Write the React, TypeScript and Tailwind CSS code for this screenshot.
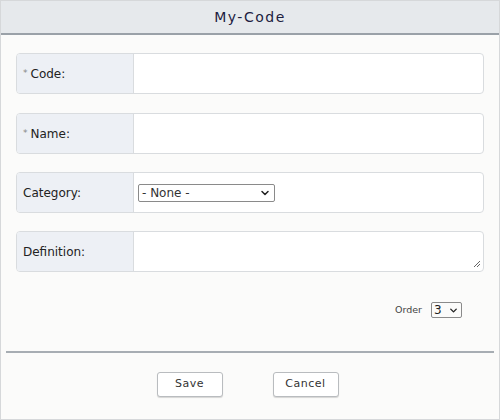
import { ChevronDown } from 'lucide-react';

function Row({ label, required, children, tall }: { label: string; required?: boolean; children?: React.ReactNode; tall?: boolean }) {
  return (
    <div className="flex h-[41px] rounded-[4px] border border-[#d9dcdf] bg-white overflow-hidden">
      <div className="w-[117px] shrink-0 flex items-center pl-[6px] bg-[#edf0f5] border-r border-[#d9dcdf] text-[12px] text-[#222]">
        {required && <span className="text-[#888] text-[9px] mr-[3px]">*</span>}
        {label}
      </div>
      <div className={`flex-1 flex ${tall ? 'items-end justify-end p-[2px]' : 'items-center pl-[4px]'}`}>{children}</div>
    </div>
  );
}

export default function App() {
  return (
    <div className="w-[500px] h-[420px] border border-[#d6d8da] bg-[#fbfbfa] flex flex-col" style={{ fontFamily: '"DejaVu Sans", Verdana, sans-serif' }}>
      <div className="h-[34px] shrink-0 bg-[#e6e9ec] border-b-2 border-[#9aa1a8] flex items-center justify-center text-[14px] tracking-[1.5px] text-[#1c2040]">
        My-Code
      </div>
      <div className="flex flex-col gap-[18px] px-[15px] pt-[18px]">
        <Row label="Code:" required />
        <div className="mt-[1px]">
          <Row label="Name:" required />
        </div>
        <Row label="Category:">
          <div className="w-[137px] h-[18px] border border-[#8a8a8a] rounded-[2px] flex items-center justify-between px-[3px] text-[12px] text-[#333]">
            <span>- None -</span>
            <ChevronDown className="w-[12px] h-[12px] text-[#222]" strokeWidth={3} />
          </div>
        </Row>
        <Row label="Definition:" tall>
          <svg width="8" height="8" viewBox="0 0 8 8" className="mb-[1px]">
            <line x1="1" y1="7" x2="7" y2="1" stroke="#666" strokeWidth="1" />
            <line x1="4" y1="7" x2="7" y2="4" stroke="#666" strokeWidth="1" />
          </svg>
        </Row>
      </div>
      <div className="flex justify-end items-center pr-[37px] mt-[30px] gap-[9px]">
        <span className="text-[9.5px] text-[#444]">Order</span>
        <div className="w-[31px] h-[16px] border border-[#8a8a8a] rounded-[2px] flex items-center justify-between px-[2px] text-[12px] text-[#222]">
          <span>3</span>
          <ChevronDown className="w-[11px] h-[11px] text-[#222]" strokeWidth={3} />
        </div>
      </div>
      <div className="mx-[5px] mt-[33px] border-t-2 border-[#a7adb3]" />
      <div className="flex justify-center gap-[50px] mt-[19px] pr-[5px]">
        <button className="w-[66px] h-[25px] bg-white border border-[#b9bcbf] rounded-[3px] text-[11px] tracking-[0.5px] text-[#333] shadow-[0_1px_1px_rgba(0,0,0,0.15)]">Save</button>
        <button className="w-[66px] h-[25px] bg-white border border-[#b9bcbf] rounded-[3px] text-[11px] tracking-[0.5px] text-[#333] shadow-[0_1px_1px_rgba(0,0,0,0.15)]">Cancel</button>
      </div>
    </div>
  );
}
